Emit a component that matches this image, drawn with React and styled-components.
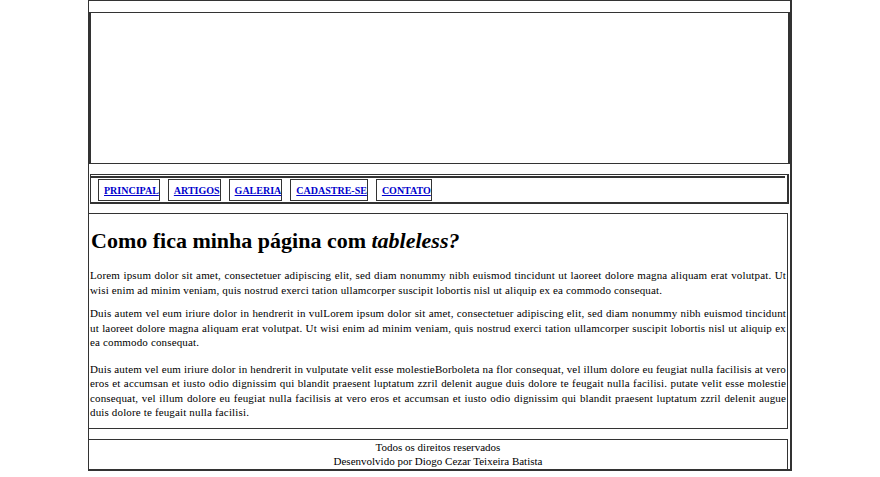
import React from "react";
import styled, { createGlobalStyle } from "styled-components";

const Global = createGlobalStyle`
  html, body { margin: 0; padding: 0; background: #fff; }
  body { font-family: "Liberation Serif", "Times New Roman", serif; font-size: 11px; color: #000; }
`;

const Container = styled.div`
  width: 701px;
  margin: 0 auto;
  border: 1px solid #333;
  border-right-width: 2px;
  border-bottom-width: 2px;
`;

const Header = styled.div`
  margin-top: 11px;
  height: 150px;
  border: 1px solid #333;
  border-left-width: 2px;
  border-right-width: 2px;
`;

const Nav = styled.div`
  margin: 10px 1px 0 1px;
  border: 1px solid #333;
  border-bottom-width: 2px;
  border-right-width: 2px;
  padding-top: 1px;
`;

const Menu = styled.ul`
  list-style: none;
  margin: 0 2px 0 0;
  padding: 1px 0 1px 7px;
  border-top: 2px solid #333;
  display: flex;
  gap: 8px;
`;

const Item = styled.li`
  border: 1px solid #333;
  height: 20px;
  display: flex;
  align-items: center;
  padding: 0 0 0 5px;
`;

const Link = styled.a`
  font-family: "Liberation Serif", "Times New Roman", serif;
  font-weight: bold;
  font-size: 10px;
  color: #0000cc;
  text-decoration: underline;
`;

const Content = styled.div`
  margin: 9px 2px 0 0;
  border: 1px solid #333;
  border-left: none;
  padding: 0 1px 0 1px;
`;

const Title = styled.h1`
  font-size: 22px;
  font-weight: bold;
  margin: 14px 0 15px 1px;
  line-height: 25px;
  em { font-style: italic; }
`;

const Para = styled.p`
  margin: 0 0 ${(p) => p.$after}px 0;
  line-height: 14.5px;
  letter-spacing: 0.15px;
  text-align: justify;
`;

const Footer = styled.div`
  margin: 10px 2px 0 0;
  border: 1px solid #333;
  border-bottom: none;
  border-left: none;
  text-align: center;
  line-height: 14.5px;
`;

const items = ["PRINCIPAL", "ARTIGOS", "GALERIA", "CADASTRE-SE", "CONTATO"];

export default function App() {
  return (
    <>
      <Global />
      <Container>
        <Header />
        <Nav>
          <Menu>
            {items.map((t) => (
              <Item key={t}>
                <Link href="#">{t}</Link>
              </Item>
            ))}
          </Menu>
        </Nav>
        <Content>
          <Title>
            Como fica minha página com <em>tableless?</em>
          </Title>
          <Para $after={9}>
            Lorem ipsum dolor sit amet, consectetuer adipiscing elit, sed diam nonummy nibh euismod tincidunt ut laoreet dolore magna aliquam erat volutpat. Ut wisi enim ad minim veniam, quis nostrud exerci tation ullamcorper suscipit lobortis nisl ut aliquip ex ea commodo consequat.
          </Para>
          <Para $after={12}>
            Duis autem vel eum iriure dolor in hendrerit in vulLorem ipsum dolor sit amet, consectetuer adipiscing elit, sed diam nonummy nibh euismod tincidunt ut laoreet dolore magna aliquam erat volutpat. Ut wisi enim ad minim veniam, quis nostrud exerci tation ullamcorper suscipit lobortis nisl ut aliquip ex ea commodo consequat.
          </Para>
          <Para $after={8}>
            Duis autem vel eum iriure dolor in hendrerit in vulputate velit esse molestieBorboleta na flor consequat, vel illum dolore eu feugiat nulla facilisis at vero eros et accumsan et iusto odio dignissim qui blandit praesent luptatum zzril delenit augue duis dolore te feugait nulla facilisi. putate velit esse molestie consequat, vel illum dolore eu feugiat nulla facilisis at vero eros et accumsan et iusto odio dignissim qui blandit praesent luptatum zzril delenit augue duis dolore te feugait nulla facilisi.
          </Para>
        </Content>
        <Footer>
          Todos os direitos reservados
          <br />
          Desenvolvido por Diogo Cezar Teixeira Batista
        </Footer>
      </Container>
    </>
  );
}
